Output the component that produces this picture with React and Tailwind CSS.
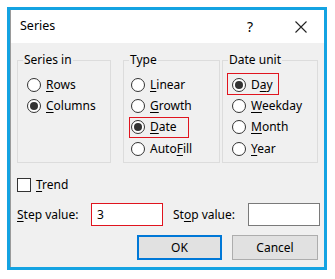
import React from 'react';

// Windows-style "Series" dialog
const Radio = ({ checked }) => (
  <span className="w-[14px] h-[14px] rounded-full border border-[#333] bg-white flex items-center justify-center shrink-0">
    {checked && <span className="w-[8px] h-[8px] rounded-full bg-[#333]" />}
  </span>
);

// label with one underlined access key
const Key = ({ before = '', k, after = '' }) => (
  <span>
    {before}
    <span className="underline underline-offset-[2px] decoration-[1px]">{k}</span>
    {after}
  </span>
);

const Option = ({ checked, label, boxed, boxClass = '' }) => (
  <div className="h-[21.4px] flex items-center relative">
    <Radio checked={checked} />
    <span className="ml-[5px]">{label}</span>
    {boxed && (
      <span className={'absolute border border-[#e0141e] ' + boxClass} />
    )}
  </div>
);

const Group = ({ title, width, padLeft, children }) => (
  <div
    className="relative h-[103px] border border-[#dcdcdc] pt-[13px]"
    style={{ width, paddingLeft: padLeft }}
  >
    <span className="absolute -top-[10px] left-[5px] px-[1px] bg-[#f0f0f0] leading-[18px]">
      {title}
    </span>
    {children}
  </div>
);

const App = () => {
  return (
    <div
      className="w-[335px] h-[279px] bg-white pt-[7px] pl-[7px] text-[12px] text-black"
      style={{ fontFamily: '"Noto Sans", "Segoe UI", Arial, sans-serif' }}
    >
      <div className="w-[320px] h-[263px] border-[3px] border-[#14a3e2] flex flex-col">
        <div className="flex-1 flex flex-col border-l border-[#9a9a9a]">
          {/* title bar */}
          <div className="h-[33px] bg-white flex items-center pl-[9px] pr-[17px] shrink-0">
            <span className="text-[12.5px]">Series</span>
            <span className="ml-auto text-[14px] mr-[42px]">?</span>
            <svg width="12" height="12" viewBox="0 0 12 12">
              <path d="M0.5 0.5 L11.5 11.5 M11.5 0.5 L0.5 11.5" stroke="#222" strokeWidth="1.1" />
            </svg>
          </div>

          {/* body */}
          <div className="flex-1 bg-[#f0f0f0] pl-[6px] pt-[17px]">
            <div className="flex">
              <Group title="Series in" width={94} padLeft={9}>
                <Option checked={false} label={<Key k="R" after="ows" />} />
                <Option checked label={<Key k="C" after="olumns" />} />
              </Group>
              <div className="w-[12px]" />
              <Group title="Type" width={97} padLeft={7}>
                <Option checked={false} label={<Key k="L" after="inear" />} />
                <Option checked={false} label={<Key k="G" after="rowth" />} />
                <Option
                  checked
                  label={<Key k="D" after="ate" />}
                  boxed
                  boxClass="-left-[2px] top-[0px] w-[60px] h-[21px]"
                />
                <Option checked={false} label={<Key before="Auto" k="F" after="ill" />} />
              </Group>
              <div className="w-[2px]" />
              <Group title="Date unit" width={96} padLeft={9}>
                <Option
                  checked
                  label={<Key before="D" k="a" after="y" />}
                  boxed
                  boxClass="-left-[5px] -top-[1px] w-[52px] h-[22px]"
                />
                <Option checked={false} label={<Key k="W" after="eekday" />} />
                <Option checked={false} label={<Key k="M" after="onth" />} />
                <Option checked={false} label={<Key k="Y" after="ear" />} />
              </Group>
            </div>

            {/* trend */}
            <div className="mt-[14px] h-[15px] flex items-center">
              <span className="w-[14px] h-[14px] border border-[#333] bg-white" />
              <span className="ml-[5px]">
                <Key k="T" after="rend" />
              </span>
            </div>

            {/* step / stop */}
            <div className="mt-[11px] flex items-center">
              <span className="w-[74px]">
                <Key k="S" after="tep value:" />
              </span>
              <div className="w-[72px] h-[23px] bg-white border border-[#e0141e] flex items-center pl-[5px]">
                3
              </div>
              <span className="ml-[10px] w-[75px]">
                <Key before="St" k="o" after="p value:" />
              </span>
              <div className="w-[72px] h-[23px] bg-white border border-[#7a7a7a]" />
            </div>

            {/* buttons */}
            <div className="mt-[9px] flex pl-[120px]">
              <button className="w-[85px] h-[25px] bg-[#e1e1e1] border-2 border-[#0078d7] flex items-center justify-center">
                OK
              </button>
              <button className="ml-[10px] w-[86px] h-[25px] bg-[#e1e1e1] border border-[#adadad] flex items-center justify-center">
                Cancel
              </button>
            </div>
          </div>
        </div>
      </div>
    </div>
  );
};

export default App;
